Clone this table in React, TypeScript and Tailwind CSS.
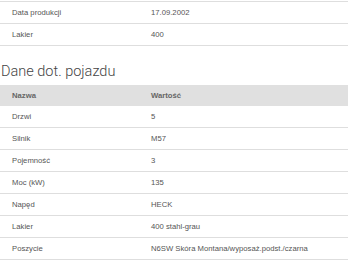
const prod = [
  ['Data produkcji', '17.09.2002'],
  ['Lakier', '400'],
]

const rows = [
  ['Drzwi', '5'],
  ['Silnik', 'M57'],
  ['Pojemność', '3'],
  ['Moc (kW)', '135'],
  ['Napęd', 'HECK'],
  ['Lakier', '400 stahl-grau'],
  ['Poszycie', 'N6SW Skóra Montana/wyposaż.podst./czarna'],
]

function Row({ name, value }: { name: string; value: string }) {
  return (
    <div className="grid grid-cols-[151px_1fr] h-[22px] items-center border-b border-[#dedede] text-[7.7px] text-[#555]">
      <span className="pl-3">{name}</span>
      <span>{value}</span>
    </div>
  )
}

export default function App() {
  return (
    <div className="w-[360px] h-[261px] overflow-hidden bg-white font-['Liberation_Sans',Arial,sans-serif] pt-px">
      <div className="w-[348px]">
        {/* Production data */}
        <div className="border-t border-[#dedede]">
          {prod.map(([n, v]) => (
            <Row key={n} name={n} value={v} />
          ))}
        </div>

        <h2 className="mt-[12px] h-[27px] pl-px font-['Roboto',sans-serif] font-light text-[14.5px] leading-[27px] text-[#444]">
          Dane dot. pojazdu
        </h2>

        {/* Vehicle data */}
        <div>
          <div className="grid grid-cols-[151px_1fr] h-[21px] items-center bg-[#e0e0e0] text-[7.7px] font-bold text-[#666]">
            <span className="pl-3">Nazwa</span>
            <span>Wartość</span>
          </div>
          {rows.map(([n, v]) => (
            <Row key={n} name={n} value={v} />
          ))}
        </div>
      </div>
    </div>
  )
}
